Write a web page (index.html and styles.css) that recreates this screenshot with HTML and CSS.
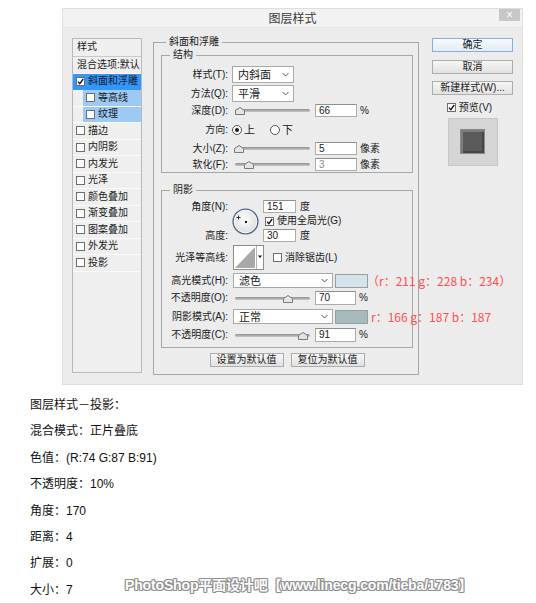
FILE: index.html
```html
<!DOCTYPE html>
<html lang="zh">
<head>
<meta charset="utf-8">
<title>图层样式</title>
<link rel="stylesheet" href="styles.css">
</head>
<body>
<div class="dialog">
  <div class="titlebar"><span class="title">图层样式</span><span class="close">×</span></div>
  <div class="dbody">
    <div class="stylelist">
      <div class="lhead">样式</div>
      <div class="litem plain">混合选项:默认</div>
      <div class="litem sel"><span class="cb on"><svg viewBox="0 0 7 7" width="7" height="7"><path d="M1 3.6 L2.8 5.6 L6.2 1" fill="none" stroke="#111" stroke-width="1.3"/></svg></span>斜面和浮雕</div>
      <div class="litem sub"><span class="subin"><span class="cb"></span>等高线</span></div>
      <div class="litem sub"><span class="subin"><span class="cb"></span>纹理</span></div>
      <div class="litem"><span class="cb"></span>描边</div>
      <div class="litem"><span class="cb"></span>内阴影</div>
      <div class="litem"><span class="cb"></span>内发光</div>
      <div class="litem"><span class="cb"></span>光泽</div>
      <div class="litem"><span class="cb"></span>颜色叠加</div>
      <div class="litem"><span class="cb"></span>渐变叠加</div>
      <div class="litem"><span class="cb"></span>图案叠加</div>
      <div class="litem"><span class="cb"></span>外发光</div>
      <div class="litem"><span class="cb"></span>投影</div>
    </div>

    <div class="mid">
      <fieldset class="grp outer">
        <legend class="lg-outer">斜面和浮雕</legend>
        <fieldset class="grp struct">
          <legend class="lg-inner">结构</legend>
          <div class="row r-sel1"><span class="lbl">样式(T):</span><div class="select s-short"><span>内斜面</span><svg class="chev" width="7" height="5" viewBox="0 0 7 5"><path d="M0.5 1 L3.5 4 L6.5 1" fill="none" stroke="#555" stroke-width="1"/></svg></div></div>
          <div class="row r-sel2"><span class="lbl">方法(Q):</span><div class="select s-short"><span>平滑</span><svg class="chev" width="7" height="5" viewBox="0 0 7 5"><path d="M0.5 1 L3.5 4 L6.5 1" fill="none" stroke="#555" stroke-width="1"/></svg></div></div>
          <div class="row r-depth"><span class="lbl">深度(D):</span><div class="slider"><svg class="thumb" style="left:6%" width="10" height="8" viewBox="0 0 10 8"><path d="M0.5 7.5V3.5L5 0.5L9.5 3.5V7.5Z" fill="#e4e4e4" stroke="#7a7a7a"/></svg></div><span class="num">66</span><span class="unit">%</span></div>
          <div class="row r-dir"><span class="lbl">方向:</span><span class="radio on"></span><span class="rtext">上</span><span class="radio second"></span><span class="rtext">下</span></div>
          <div class="row r-size"><span class="lbl">大小(Z):</span><div class="slider"><svg class="thumb" style="left:5%" width="10" height="8" viewBox="0 0 10 8"><path d="M0.5 7.5V3.5L5 0.5L9.5 3.5V7.5Z" fill="#e4e4e4" stroke="#7a7a7a"/></svg></div><span class="num">5</span><span class="unit">像素</span></div>
          <div class="row r-soft"><span class="lbl">软化(F):</span><div class="slider"><svg class="thumb" style="left:19%" width="10" height="8" viewBox="0 0 10 8"><path d="M0.5 7.5V3.5L5 0.5L9.5 3.5V7.5Z" fill="#e4e4e4" stroke="#7a7a7a"/></svg></div><span class="num dim">3</span><span class="unit">像素</span></div>
        </fieldset>

        <fieldset class="grp shadow">
          <legend class="lg-inner">阴影</legend>
          <div class="angle">
            <span class="lbl a1">角度(N):</span>
            <svg class="dial" width="27" height="27" viewBox="0 0 27 27">
              <defs><radialGradient id="dg" cx="45%" cy="40%" r="60%"><stop offset="0" stop-color="#fdfdfd"/><stop offset="1" stop-color="#dcdcdc"/></radialGradient></defs>
              <circle cx="13.5" cy="13.5" r="12.4" fill="url(#dg)" stroke="#56698c" stroke-width="1.4"/>
              <circle cx="13.5" cy="13.5" r="11.2" fill="none" stroke="#ffffff" stroke-width="0.8" opacity="0.8"/>
              <path d="M6.5 7.5 V11.5 M4.5 9.5 H8.5" stroke="#222" stroke-width="0.9"/>
              <rect x="13" y="13" width="2" height="2" fill="#111"/>
            </svg>
            <span class="num a-in1">151</span><span class="unit a-u1">度</span>
            <span class="chk a-chk"><span class="cb on"><svg viewBox="0 0 7 7" width="7" height="7"><path d="M1 3.6 L2.8 5.6 L6.2 1" fill="none" stroke="#111" stroke-width="1.3"/></svg></span>使用全局光(G)</span>
            <span class="lbl a3">高度:</span>
            <span class="num a-in3">30</span><span class="unit a-u3">度</span>
          </div>
          <div class="row r-contour"><span class="lbl">光泽等高线:</span>
            <svg class="contour" width="31" height="25" viewBox="0 0 31 25">
              <rect x="0.5" y="0.5" width="30" height="24" fill="#fff" stroke="#8c8c8c"/>
              <path d="M2 23 L22 2 L22 23 Z" fill="#a9a9a9"/>
              <path d="M23.5 1 V24" stroke="#b4b4b4"/>
              <path d="M25 10.5 L29 10.5 L27 13 Z" fill="#111"/>
            </svg>
            <span class="chk c-chk"><span class="cb"></span>消除锯齿(L)</span>
          </div>
          <div class="row r-mode1"><span class="lbl">高光模式(H):</span><div class="select s-long"><span>滤色</span><svg class="chev" width="7" height="5" viewBox="0 0 7 5"><path d="M0.5 1 L3.5 4 L6.5 1" fill="none" stroke="#555" stroke-width="1"/></svg></div><span class="swatch sw-hi"></span><span class="anno a-first">（r：211 g：228 b：234）</span></div>
          <div class="row r-op1"><span class="lbl">不透明度(O):</span><div class="slider"><svg class="thumb" style="left:70%" width="10" height="8" viewBox="0 0 10 8"><path d="M0.5 7.5V3.5L5 0.5L9.5 3.5V7.5Z" fill="#e4e4e4" stroke="#7a7a7a"/></svg></div><span class="num">70</span><span class="unit">%</span></div>
          <div class="row r-mode2"><span class="lbl">阴影模式(A):</span><div class="select s-long"><span>正常</span><svg class="chev" width="7" height="5" viewBox="0 0 7 5"><path d="M0.5 1 L3.5 4 L6.5 1" fill="none" stroke="#555" stroke-width="1"/></svg></div><span class="swatch sw-sh"></span><span class="anno a-second">r：166 g：187 b：187</span></div>
          <div class="row r-op2"><span class="lbl">不透明度(C):</span><div class="slider"><svg class="thumb" style="left:91%" width="10" height="8" viewBox="0 0 10 8"><path d="M0.5 7.5V3.5L5 0.5L9.5 3.5V7.5Z" fill="#e4e4e4" stroke="#7a7a7a"/></svg></div><span class="num">91</span><span class="unit">%</span></div>
        </fieldset>

        <div class="defbtns"><span class="btn wide">设置为默认值</span><span class="btn wide">复位为默认值</span></div>
      </fieldset>
    </div>

    <div class="right">
      <span class="btn default">确定</span>
      <span class="btn">取消</span>
      <span class="btn">新建样式(W)...</span>
      <span class="chk preview"><span class="cb on"><svg viewBox="0 0 7 7" width="7" height="7"><path d="M1 3.6 L2.8 5.6 L6.2 1" fill="none" stroke="#111" stroke-width="1.3"/></svg></span>预览(V)</span>
      <div class="pbox"><div class="psq"></div></div>
    </div>
  </div>
</div>

<div class="notes">
  <p>图层样式－投影：</p>
  <p>混合模式：正片叠底</p>
  <p>色值：(R:74 G:87 B:91)</p>
  <p>不透明度：10%</p>
  <p>角度：170</p>
  <p>距离：4</p>
  <p>扩展：0</p>
  <p>大小：7</p>
</div>
<div class="watermark">PhotoShop平面设计吧【www.linecg.com/tieba/1783】</div>
</body>
</html>
```

FILE: styles.css
```css
* { box-sizing: border-box; }

body {
  margin: 0;
  width: 536px;
  height: 604px;
  overflow: hidden;
  position: relative;
  background: #ffffff;
  color: #1a1a1a;
  font-family: "Liberation Sans", "Noto Sans CJK SC", sans-serif;
}

/* ---------- dialog ---------- */
.dialog {
  margin: 8px 0 0 62px;
  width: 461px;
  height: 377px;
  background: #ececec;
  border: 1px solid #dedede;
  font-size: 10px;
  line-height: 12px;
}

.titlebar {
  height: 19px;
  background: #f2f2f2;
  border-bottom: 1px solid #e4e4e4;
  display: grid;
  grid-template-columns: 1fr auto 1fr;
  align-items: start;
}
.title {
  grid-column: 2;
  font-family: "Noto Sans CJK SC", sans-serif;
  font-size: 12px;
  line-height: 17px;
  color: #3a3a3a;
}
.close {
  grid-column: 3;
  justify-self: end;
  width: 21px;
  height: 12px;
  margin-right: 2px;
  background: #c7c7c7;
  color: #ffffff;
  font-size: 12px;
  line-height: 12px;
  text-align: center;
}

.dbody {
  display: flex;
  align-items: flex-start;
  padding: 8px 0 0 9px;
}

/* ---------- left style list ---------- */
.stylelist {
  width: 70px;
  height: 335px;
  margin-top: 2px;
  border: 1px solid #b9b9b9;
  background: #efefef;
  flex: none;
}
.lhead {
  height: 18px;
  padding-left: 4px;
  line-height: 15px;
  border-bottom: 1px solid #c9c9c9;
}
.litem {
  height: 16.5px;
  display: flex;
  align-items: center;
  gap: 3px;
  padding-left: 3px;
  border-bottom: 1px solid #fbfbfb;
  white-space: nowrap;
}
.litem.plain { padding-left: 4px; }
.litem.sel { background: #3297fd; border-bottom-color: #3297fd; }
.litem.sub { padding-left: 10px; }
.subin {
  align-self: stretch;
  flex: 1;
  display: flex;
  align-items: center;
  gap: 3px;
  padding-left: 3px;
  background: #9ccaf4;
}

/* checkbox & radio */
.cb {
  width: 9px;
  height: 9px;
  border: 1px solid #6e6e6e;
  background: #ffffff;
  flex: none;
  display: inline-flex;
  align-items: center;
  justify-content: center;
}
.chk {
  display: inline-flex;
  align-items: center;
  gap: 3px;
  white-space: nowrap;
}
.radio {
  width: 10px;
  height: 10px;
  border-radius: 50%;
  border: 1px solid #555555;
  background: #ffffff;
  flex: none;
  display: inline-flex;
  align-items: center;
  justify-content: center;
}
.radio.on::after {
  content: "";
  width: 4px;
  height: 4px;
  border-radius: 50%;
  background: #1c1c1c;
}
.radio.second { margin-left: 15px; }
.rtext { margin-left: 2px; font-size: 11px; }

/* ---------- middle ---------- */
.mid {
  width: 266px;
  margin-left: 11px;
  flex: none;
}
.grp {
  margin: 0;
  min-width: 0;
  border: 1px solid #a7a7a7;
}
.grp legend {
  padding: 0 3px;
  line-height: 12px;
  font-size: 10px;
}
.outer { padding: 0 5px 7px 7px; }
.lg-outer { margin-left: 5px; }
.lg-inner { margin-left: 8px; }
.struct { margin-top: 1px; padding: 5px 0 1px 0; }
.shadow { margin-top: 11px; padding: 4px 0 5px 0; }

.row {
  display: flex;
  align-items: center;
  white-space: nowrap;
}
.lbl {
  width: 66px;
  margin-right: 4px;
  text-align: right;
  flex: none;
}
.r-sel1 { height: 17px; margin-bottom: 2px; }
.r-sel2 { height: 17px; margin-bottom: 2px; }
.r-depth { height: 13px; margin-bottom: 7px; }
.r-dir { height: 12px; margin-bottom: 6px; }
.r-size { height: 13px; margin-bottom: 3px; }
.r-soft { height: 13px; }

.select {
  height: 100%;
  background: #ffffff;
  border: 1px solid #a9a9a9;
  display: flex;
  align-items: center;
  justify-content: space-between;
  padding: 0 4px 0 5px;
  font-size: 11px;
  flex: none;
}
.s-short { width: 62px; }
.s-long { width: 100px; margin-left: 1px; }

.slider {
  position: relative;
  width: 75px;
  height: 13px;
  margin-left: 3px;
  flex: none;
}
.slider::before {
  content: "";
  position: absolute;
  left: 0;
  right: 0;
  top: 5px;
  height: 3px;
  border-radius: 2px;
  background: linear-gradient(#8e8e8e, #c9c9c9);
}
.thumb {
  position: absolute;
  top: 3px;
  margin-left: -5px;
}

.num {
  width: 42px;
  height: 13px;
  margin-left: 5px;
  padding-left: 3px;
  background: #ffffff;
  border: 1px solid #acacac;
  border-top-color: #8f8f8f;
  line-height: 11px;
  flex: none;
}
.num.dim { color: #8a8a8a; }
.unit { margin-left: 3px; }

/* angle block */
.angle {
  display: grid;
  grid-template-columns: 66px 27px 33px auto;
  grid-template-rows: 13px 12px 13px;
  column-gap: 4px;
  row-gap: 2px;
  align-items: center;
  margin-bottom: 3px;
  white-space: nowrap;
}
.angle .lbl { width: auto; margin-right: 0; }
.a1 { grid-column: 1; grid-row: 1; }
.a3 { grid-column: 1; grid-row: 3; }
.dial { grid-column: 2; grid-row: 1 / 4; align-self: center; }
.a-in1, .a-in3 { width: 33px; margin-left: 0; }
.a-in1 { grid-column: 3; grid-row: 1; }
.a-u1 { grid-column: 4; grid-row: 1; margin-left: 0; }
.a-in3 { grid-column: 3; grid-row: 3; }
.a-u3 { grid-column: 4; grid-row: 3; margin-left: 0; }
.a-chk { grid-column: 3 / 5; grid-row: 2; margin-left: 2px; }

.r-contour { height: 25px; margin-bottom: 3px; }
.contour { margin-left: 1px; flex: none; }
.c-chk { margin-left: 9px; }

.r-mode1 { height: 15px; margin-bottom: 3px; }
.r-op1 { height: 14px; margin-bottom: 4px; }
.r-mode2 { height: 15px; margin-bottom: 4px; }
.r-op2 { height: 14px; }
.r-op1 .num, .r-op2 .num { height: 14px; width: 41px; }

.swatch {
  width: 33px;
  height: 14px;
  margin-left: 2px;
  border: 1px solid #9c9c9c;
  flex: none;
}
.sw-hi { background: rgb(211, 228, 234); }
.sw-sh { background: rgb(166, 187, 187); }

.anno {
  font-family: "Noto Sans CJK SC", sans-serif;
  font-size: 12px;
  line-height: 14px;
  color: #ff4f4f;
}
.a-first { margin-left: -1px; }
.a-second { margin-left: 3px; }

.defbtns {
  display: flex;
  justify-content: center;
  gap: 7px;
  margin-top: 5px;
}

/* buttons */
.btn {
  display: block;
  height: 14px;
  border: 1px solid #adadad;
  background: linear-gradient(#f6f6f6, #e2e2e2);
  text-align: center;
  line-height: 12px;
  white-space: nowrap;
}
.btn.wide { width: 74px; }
.btn.default { border-color: #7fb0e6; background: linear-gradient(#f8fbff, #e6ebf1); }

/* ---------- right column ---------- */
.right {
  width: 81px;
  margin: 2px 0 0 13px;
  display: flex;
  flex-direction: column;
  gap: 7.5px;
  flex: none;
}
.preview {
  align-self: center;
  height: 12px;
  margin-top: -1px;
  margin-left: -6px;
}
.pbox {
  align-self: center;
  width: 50px;
  height: 48px;
  margin-top: -3.5px;
  background: #d5d5d5;
  border: 1px solid #c6c6c6;
  display: flex;
  align-items: center;
  justify-content: center;
}
.psq {
  width: 23px;
  height: 23px;
  background: #5b5b5b;
  box-shadow: inset 2px 2px 0 #7c7c7c, inset -2px -2px 0 #474747, 0 0 0 1px #8a8a8a;
}

/* ---------- notes ---------- */
.notes {
  margin-top: 7px;
  padding-left: 30px;
  font-size: 12px;
  line-height: 26.4px;
  color: #111111;
  border-bottom: 2px solid #dcdcdc;
}
.notes p { margin: 0; }

.watermark {
  position: absolute;
  left: 125px;
  top: 577px;
  font-size: 14px;
  font-weight: bold;
  letter-spacing: -0.15px;
  line-height: 16px;
  color: #fbfbfb;
  white-space: nowrap;
  text-shadow: -1px 0 #8f8f8f, 1px 0 #8f8f8f, 0 -1px #8f8f8f, 0 1px #8f8f8f,
               -1px -1px #9a9a9a, 1px 1px #9a9a9a, -1px 1px #9a9a9a, 1px -1px #9a9a9a;
}
```
